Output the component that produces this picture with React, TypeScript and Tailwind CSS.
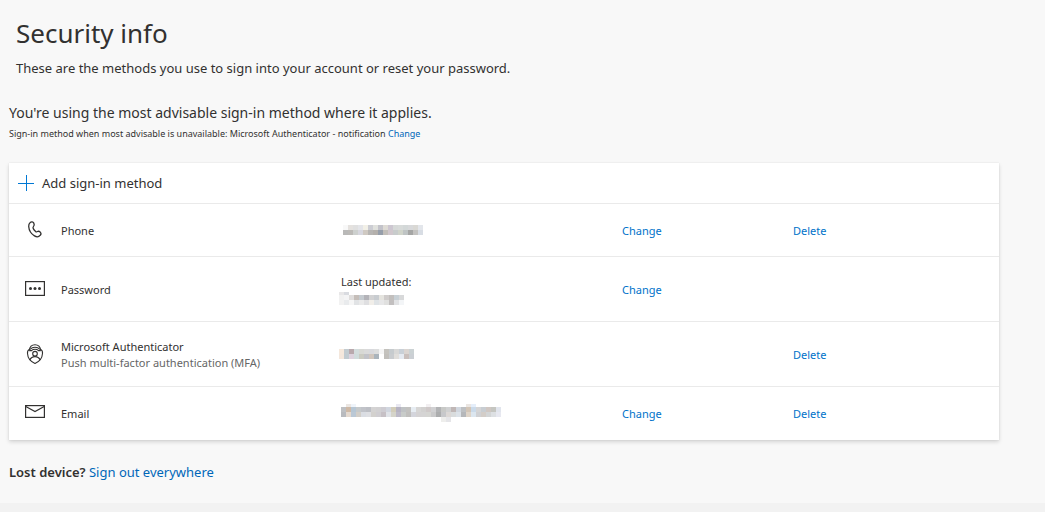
import { type FC, type ReactNode } from 'react';

type Cell = [x: number, y: number, height: number, color: string];

type Method = {
	id: string;
	icon: ReactNode;
	name: string;
	description?: string;
	label?: string;
	value: ReactNode;
	canChange?: boolean;
	canDelete?: boolean;
	tall?: boolean;
};

const CELL = 5;

// each row is a list of colors, '-' leaves the cell empty
const toCells = (rows: { height: number; colors: string }[]): Cell[] => {
	const cells: Cell[] = [];
	let y = 0;

	for (const row of rows) {
		row.colors.split(' ').forEach((color, i) => {
			if (color !== '-') cells.push([i * CELL, y, row.height, `#${color}`]);
		});
		y += row.height;
	}

	return cells;
};

const phoneCells = toCells([
	{
		height: 5,
		colors:
			'f8f8f8 e5e2df e0e0e0 e4e5e9 f2f0e7 cccdd3 e0e1dd c3c3ca dedbd5 cdc7d1 d6d9d8 d8dbda d3d8d8 d8d9db d9d8d4 e3e6eb'
	},
	{
		height: 5,
		colors:
			'b9b9b8 bcbab7 cdd0ce d7d7df cfc9c2 b7b5b3 b4b0ac 969eaa c2beb9 d1c7cd c8cccc d0d4ca bfc4c4 a5a6a5 c3c2c0 d8dde4'
	}
]);

const dateCells = toCells([
	{ height: 3, colors: 'e8e7e8 d9dbe0' },
	{
		height: 5,
		colors:
			'f1f1f1 f4f4f5 dfdddc c5beb9 c4cacf b3b3b8 d2d2d3 c8ccd0 e5e4df cfcccb c2bfbd c8d0d5 d8d9da'
	},
	{
		height: 5,
		colors:
			'f2f2f2 e9ebed f6f6f6 e1e3e5 eaeaea dfdfe1 f1eee9 dfe3e6 e7e7e8 e0e0df c2bfbf e1e2e4 f3f5f7'
	}
]);

const deviceCells = toCells([
	{
		height: 5,
		colors:
			'f5e8dc c2cbd0 b9a9ad d3dddd d8d9d5 dadada d8d9dd dcdddd f4f4f4 c4c2bd c6cbce d8d8d7 c9d0d7 dbd5d1 cbd2d4'
	},
	{
		height: 5,
		colors:
			'f4e7dc c1cbd1 ddd2dd d0dcdc cbcbc2 c2c3c9 d0c6bd aab4bc - c1bfbb c9cccf e0dedb e5eaf1 c9bfbc cbcfd4'
	}
]);

const emailCells = toCells([
	{
		height: 3,
		colors:
			'- ebe6e2 eff4fa - - - - - - - - e9e8f1 - - - - - f2eff1 - - - - - - - ebe6e2 e5eefa - - - - -'
	},
	{
		height: 5,
		colors:
			'bec0c3 ceb9a6 b6c6d4 c5c9cb c1c3c9 bdbfc5 d4d3d3 d2d1d2 ceccd2 d1d6df d2cdba b6b3c2 bfc2c4 c2c1bf e7edf3 d7d6d5 d2d1d0 cfc9c9 d0d0d2 b2b3b5 c8c9c7 d0d1d2 c0b7b6 d1d7df bdc0c3 d2c5b7 cadaea d5d5d6 c8cdd2 d0c7c2 c5c6c1 e1e5ed'
	},
	{
		height: 5,
		colors:
			'b8babe e4d9cf bbc8d5 d2cec8 dadde3 dedfe3 d3d1ce d0ced2 c6c0c5 e0e3e8 d5d4ca bdbac8 c8cbc9 c0bfbd d4d5dc d5d3d4 d5d4d4 d5d5d2 c9c9ca acadae c7c8cb dcd8d6 d9dcdd dce2e8 b5b7ba ded4c8 dce6ef d0d1d4 d3cdc8 d3d5d6 dde0e3 e7e8f0'
	},
	{
		height: 5,
		colors: '- - - - - - - - - - - - - - - - - - - - eeeeec e5e5e8'
	}
]);

const Mosaic: FC<{
	label: string;
	cells: Cell[];
	width: number;
	height: number;
	className?: string;
}> = ({ label, cells, width, height, className }) => (
	<svg
		role="img"
		aria-label={label}
		width={width}
		height={height}
		shapeRendering="crispEdges"
		className={className}
	>
		{cells.map(([x, y, h, fill]) => (
			<rect key={`${x}-${y}`} x={x} y={y} width={CELL} height={h} fill={fill} />
		))}
	</svg>
);

const PhoneIcon = () => (
	<svg
		width="20"
		height="20"
		viewBox="0 0 20 20"
		fill="none"
		stroke="currentColor"
		strokeWidth="1.3"
		strokeLinejoin="round"
	>
		<path d="M5.2 2.4C6.4 1.4 8 1.7 8.8 3.1c.8 1.5.6 2.5-.4 3.5-.6.6-.5 1.2-.1 2 .6 1.2 1.5 2.3 2.4 3 .7.5 1.2.3 1.8-.1.9-.5 1.8-.2 2.7.6 1 1 1 2.1.1 3.1-1.4 1.7-3.6 2.1-5.8.7C6.4 14 4 10.3 3.7 6.5c-.1-1.7.3-3.2 1.5-4.1Z" />
	</svg>
);

const PasswordIcon = () => (
	<svg width="20" height="20" viewBox="0 0 20 20" fill="currentColor">
		<rect
			x="0.6"
			y="2.6"
			width="18.8"
			height="13.8"
			fill="none"
			stroke="currentColor"
			strokeWidth="1.2"
		/>
		<circle cx="5.5" cy="9.5" r="1.5" />
		<circle cx="10" cy="9.5" r="1.5" />
		<circle cx="14.5" cy="9.5" r="1.5" />
	</svg>
);

const AuthenticatorIcon = () => (
	<svg
		width="20"
		height="20"
		viewBox="0 0 20 20"
		fill="none"
		stroke="currentColor"
		strokeWidth="1.1"
	>
		<path d="M4.3 5.5C2.9 6.2 2.3 7.5 2.5 9.5c.3 4.7 3.5 8.3 7.500 9.9 4-1.600 7.200-5.200 7.500-9.900.2-2-.4-3.300-1.800-4" />
		<path d="M4.2 6.3C4.7 2.7 7 .7 10 .7s5.3 2 5.8 5.6" />
		<path d="M5 5.3C6.4 3.9 8 3.2 10 3.2s3.6.7 5 2.1M4.2 6.6h2.3C7.5 5.7 8.6 5.3 10 5.3s2.5.4 3.5 1.3h2.3" />
		<circle cx="10" cy="9.7" r="2.3" />
		<path d="M4.8 16c1-2.2 2.8-3.4 5.2-3.4s4.2 1.2 5.2 3.4" />
	</svg>
);

const EmailIcon = () => (
	<svg
		width="20"
		height="20"
		viewBox="0 0 20 20"
		fill="none"
		stroke="currentColor"
		strokeWidth="1.2"
	>
		<rect x="0.6" y="2.6" width="18.8" height="11.8" />
		<path d="M.8 3.4 10 8.6l9.2-5.2" />
	</svg>
);

const methods: Method[] = [
	{
		id: 'phone',
		icon: <PhoneIcon />,
		name: 'Phone',
		value: (
			<Mosaic
				label="Hidden phone number"
				cells={phoneCells}
				width={80}
				height={10}
				className="ml-0.5"
			/>
		),
		canChange: true,
		canDelete: true
	},
	{
		id: 'password',
		icon: <PasswordIcon />,
		name: 'Password',
		label: 'Last updated:',
		value: (
			<Mosaic
				label="Hidden date"
				cells={dateCells}
				width={65}
				height={13}
				className="-ml-0.5"
			/>
		),
		canChange: true,
		tall: true
	},
	{
		id: 'authenticator',
		icon: <AuthenticatorIcon />,
		name: 'Microsoft Authenticator',
		description: 'Push multi-factor authentication (MFA)',
		value: (
			<Mosaic
				label="Hidden device name"
				cells={deviceCells}
				width={75}
				height={10}
				className="-ml-0.5"
			/>
		),
		canDelete: true,
		tall: true
	},
	{
		id: 'email',
		icon: <EmailIcon />,
		name: 'Email',
		value: (
			<Mosaic
				label="Hidden email address"
				cells={emailCells}
				width={160}
				height={18}
			/>
		),
		canChange: true,
		canDelete: true
	}
];

const LinkButton: FC<{ children: ReactNode }> = ({ children }) => (
	<button
		type="button"
		className="block cursor-pointer text-[#0072c9] hover:underline"
	>
		{children}
	</button>
);

const MethodRow: FC<{ method: Method }> = ({ method }) => (
	<tr className="border-t border-[#eaeaea]">
		<td className={method.tall ? 'h-[65px] pl-4' : 'h-[53px] pl-4'}>
			{method.icon}
		</td>
		<th scope="row" className="pt-0.5 text-left font-normal">
			{method.name}
			{method.description && (
				<div className="text-[#666666]">{method.description}</div>
			)}
		</th>
		<td>
			{method.label && <div className="mb-0.5">{method.label}</div>}
			{method.value}
		</td>
		<td className="pt-0.5">
			{method.canChange && <LinkButton>Change</LinkButton>}
		</td>
		<td className="pt-0.5">
			{method.canDelete && <LinkButton>Delete</LinkButton>}
		</td>
	</tr>
);

export default function App() {
	return (
		<div className="flex min-h-screen flex-col bg-[#f2f2f2] font-['Segoe_UI','Noto_Sans',sans-serif] text-[#323130]">
			<main className="bg-[#f8f8f8] pt-[15px] pr-[46px] pb-[21px] pl-[9px]">
				<header className="pl-[7px]">
					<h1 className="text-[26px] leading-9">Security info</h1>
					<p className="mt-[7px] text-[13px] leading-5">
						These are the methods you use to sign into your account or reset
						your password.
					</p>
				</header>

				<section className="mt-[25px]">
					<p className="text-[14px] leading-5">
						You're using the most advisable sign-in method where it applies.
					</p>
					<p className="mt-[3px] text-[9px] leading-4">
						Sign-in method when most advisable is unavailable: Microsoft
						Authenticator - notification{' '}
						<a href="#default-method" className="text-[#0067b8]">
							Change
						</a>
					</p>
				</section>

				<section className="mt-[21px] bg-white shadow-[0_2px_4px_rgba(0,0,0,0.15),0_0_1px_rgba(0,0,0,0.12)]">
					<button
						type="button"
						className="flex h-10 w-full cursor-pointer items-center gap-2 pl-[9px] text-[13px]"
					>
						<svg
							width="16"
							height="16"
							viewBox="0 0 16 16"
							stroke="#0078d4"
							className="shrink-0"
						>
							<path d="M0 8.5h16M8.5 0v16" />
						</svg>
						<span className="pt-0.5">Add sign-in method</span>
					</button>
					<table className="w-full table-fixed text-[11px] leading-4">
						<colgroup>
							<col className="w-[52px]" />
							<col className="w-[280px]" />
							<col className="w-[281px]" />
							<col className="w-[171px]" />
							<col />
						</colgroup>
						<tbody>
							{methods.map(method => (
								<MethodRow key={method.id} method={method} />
							))}
						</tbody>
					</table>
				</section>

				<p className="mt-[22px] text-[13px] leading-5">
					<span className="font-semibold">Lost device?</span>{' '}
					<a href="#sign-out" className="text-[#0067b8]">
						Sign out everywhere
					</a>
				</p>
			</main>
		</div>
	);
}
